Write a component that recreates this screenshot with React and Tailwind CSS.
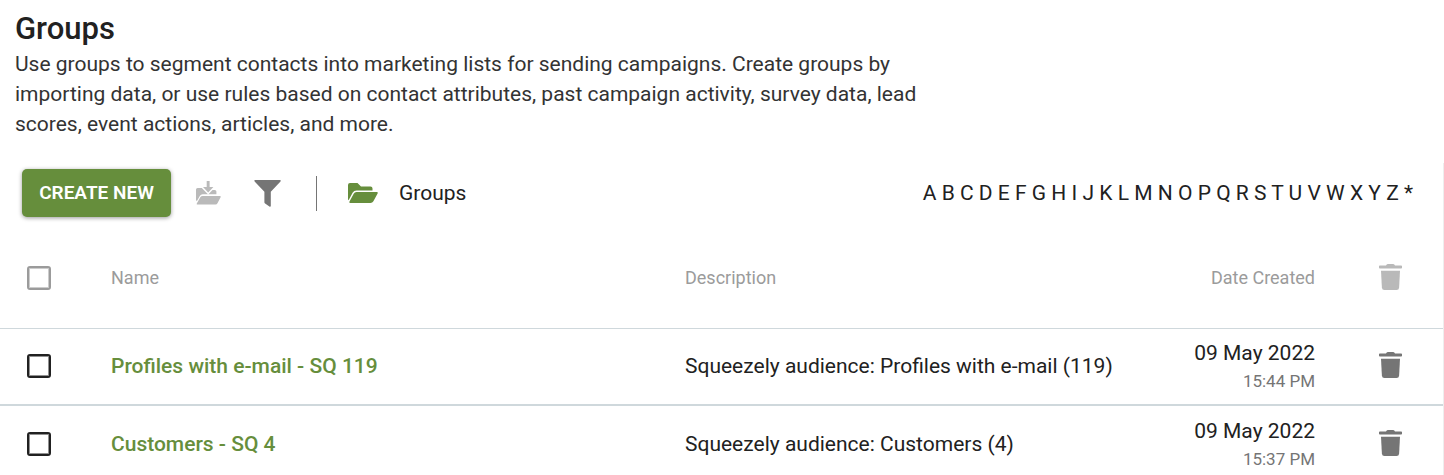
import { useState } from 'react';

const LETTERS = [...'ABCDEFGHIJKLMNOPQRSTUVWXYZ*'];

const GROUPS = [
  { id: 119, name: 'Profiles with e-mail - SQ 119', description: 'Squeezely audience: Profiles with e-mail (119)', date: '09 May 2022', time: '15:44 PM' },
  { id: 4, name: 'Customers - SQ 4', description: 'Squeezely audience: Customers (4)', date: '09 May 2022', time: '15:37 PM' },
];

function TrashIcon() {
  return (
    <svg className="block w-[23px] h-[26px]" viewBox="0 0 23 26" fill="currentColor" aria-hidden="true">
      <path d="M.8 1.400h6.200l.7-.9Q8.100 0 8.800 0h5.400q.7 0 1.100.5l.7.9h6.200q.8 0 .8.800v1.500q0 .8-.8.800H.8q-.8 0-.8-.8V2.200q0-.8.8-.8z" />
      <path d="M2 6.700h19l-.9 17q-.2 2.300-2.500 2.300H5.400q-2.300 0-2.500-2.300z" />
    </svg>
  );
}

function MoveIcon() {
  return (
    <svg className="block w-[25px] h-6" viewBox="0 0 25 24" fill="currentColor" aria-hidden="true">
      <path d="M10.700 0h2.900v6h3.800L12.200 11.500 7 6h3.700z" />
      <path d="M0 19V8.500Q0 7 1.600 7h4.200l6.400 6.400L16.500 9h2.300q1.600 0 1.600 1.600v2.700H6.700q-1.900 0-2.900 1.700L.8 20.300z" />
      <path d="M6.700 14.900h17.100q1.400 0 .8 1.400l-3 5.800q-.7 1.500-2.200 1.500H1.600q-1.400 0-.7-1.300l3.400-6q.8-1.400 2.400-1.400z" />
    </svg>
  );
}

function FilterIcon() {
  return (
    <svg className="block w-[27px] h-[27px]" viewBox="0 0 27 27" fill="currentColor" aria-hidden="true">
      <path d="M1 0h25q1.200.2.500 1.400L16.800 11.700v14.200q-.2 1.200-1.400.6l-4.300-3q-.7-.5-.7-1.300V11.700L.6 1.400Q-.1.200 1 0z" />
    </svg>
  );
}

function FolderIcon() {
  return (
    <svg className="block w-[30px] h-5" viewBox="0 0 30 20" fill="currentColor" aria-hidden="true">
      <path d="M0 16V2Q0 0 2 0h7.500l3.500 3.500h9.500q2 0 2 2v2H8.500q-2.600 0-3.900 2.200L.6 17.300Q0 17 0 16z" />
      <path d="M8.500 9h20.300q1.500 0 .8 1.500l-4.200 7.700Q24.400 20 22.500 20H2.300q-1.500 0-.8-1.500l4.200-7.800Q6.600 9 8.500 9z" />
    </svg>
  );
}

function Checkbox({ label, checked, onChange, muted }) {
  return (
    <input
      type="checkbox"
      aria-label={label}
      checked={checked}
      onChange={onChange}
      className={`block appearance-none w-6 h-6 rounded-[3px] border-2 ${
        muted
          ? 'border-[#9b9b9b] checked:bg-[#9b9b9b] shadow-[inset_0_0_0_1px_#cccccc]'
          : 'border-[#212121] checked:bg-[#212121] shadow-[inset_0_0_0_1px_#909090]'
      }`}
    />
  );
}

export default function App() {
  const [selected, setSelected] = useState([]);
  const allSelected = selected.length === GROUPS.length;

  const toggle = (id) =>
    setSelected(selected.includes(id) ? selected.filter((s) => s !== id) : [...selected, id]);

  return (
    <div className="bg-white text-[#212121] font-[Roboto,sans-serif] text-[21px] leading-8">
      {/* Page heading */}
      <header className="px-[15px] pt-2">
        <h1 className="text-[31px] leading-[41px] font-medium">Groups</h1>
        <p className="max-w-[910px] leading-[30px] text-[#333333]">
          Use groups to segment contacts into marketing lists for sending campaigns. Create groups by
          importing data, or use rules based on contact attributes, past campaign activity, survey data, lead
          scores, event actions, articles, and more.
        </p>
      </header>

      <main className="mt-6 border-r border-[#eeeeee]">
        {/* Toolbar */}
        <div className="flex items-center h-[60px] pl-[22px] pr-[30px]">
          <button className="h-12 min-w-[149px] px-4 rounded-[5px] bg-[#668e3c] text-white text-[19px] font-semibold shadow-[0_1px_4px_rgba(0,0,0,0.4)]">
            CREATE NEW
          </button>
          <button aria-label="Move to folder" className="ml-[25px] text-[#bababa]"><MoveIcon /></button>
          <button aria-label="Filter" className="ml-[33px] text-[#757575]"><FilterIcon /></button>
          <div className="ml-[35px] w-px h-[35px] bg-[#757575]" />
          <a href="#groups" className="ml-[31px] flex items-center gap-[21px]">
            <span className="text-[#668e3c]"><FolderIcon /></span>
            Groups
          </a>
          <nav aria-label="Filter by letter" className="ml-auto">
            {LETTERS.map((letter) => (
              <span key={letter}>
                <a href={`#${letter}`}>{letter}</a>{' '}
              </span>
            ))}
          </nav>
        </div>

        {/* Groups list */}
        <table className="w-full table-fixed text-left">
          <colgroup>
            <col className="w-[111px]" />
            <col />
            <col className="w-[450px]" />
            <col className="w-[180px]" />
            <col className="w-32" />
          </colgroup>
          <thead className="text-lg text-[#9b9b9b]">
            <tr className="h-[105px] border-b border-[#cfd8dc]">
              <th className="pl-[27px] pt-1.5">
                <Checkbox
                  muted
                  label="Select all groups"
                  checked={allSelected}
                  onChange={() => setSelected(allSelected ? [] : GROUPS.map((g) => g.id))}
                />
              </th>
              <th className="pt-1.5 font-normal">Name</th>
              <th className="pt-1.5 font-normal">Description</th>
              <th className="pt-1.5 font-normal text-right">Date Created</th>
              <th className="pl-16 pt-1 text-[#b9b9b9]">
                <button aria-label="Delete selected" className="block"><TrashIcon /></button>
              </th>
            </tr>
          </thead>
          <tbody>
            {GROUPS.map((group) => (
              <tr key={group.id} className="h-[77px] border-b-2 border-[#cfd8dc]">
                <td className="pl-[27px]">
                  <Checkbox
                    label={`Select ${group.name}`}
                    checked={selected.includes(group.id)}
                    onChange={() => toggle(group.id)}
                  />
                </td>
                <td>
                  <a href={`#group-${group.id}`} className="font-medium text-[#668e3c]">{group.name}</a>
                </td>
                <td>{group.description}</td>
                <td className="pt-0.5 text-right">
                  <div className="leading-7">{group.date}</div>
                  <div className="text-[17px] leading-7 text-[#757575]">{group.time}</div>
                </td>
                <td className="pl-16 pb-0.5 text-[#757575]">
                  <button aria-label={`Delete ${group.name}`} className="block"><TrashIcon /></button>
                </td>
              </tr>
            ))}
          </tbody>
        </table>
      </main>
    </div>
  );
}
